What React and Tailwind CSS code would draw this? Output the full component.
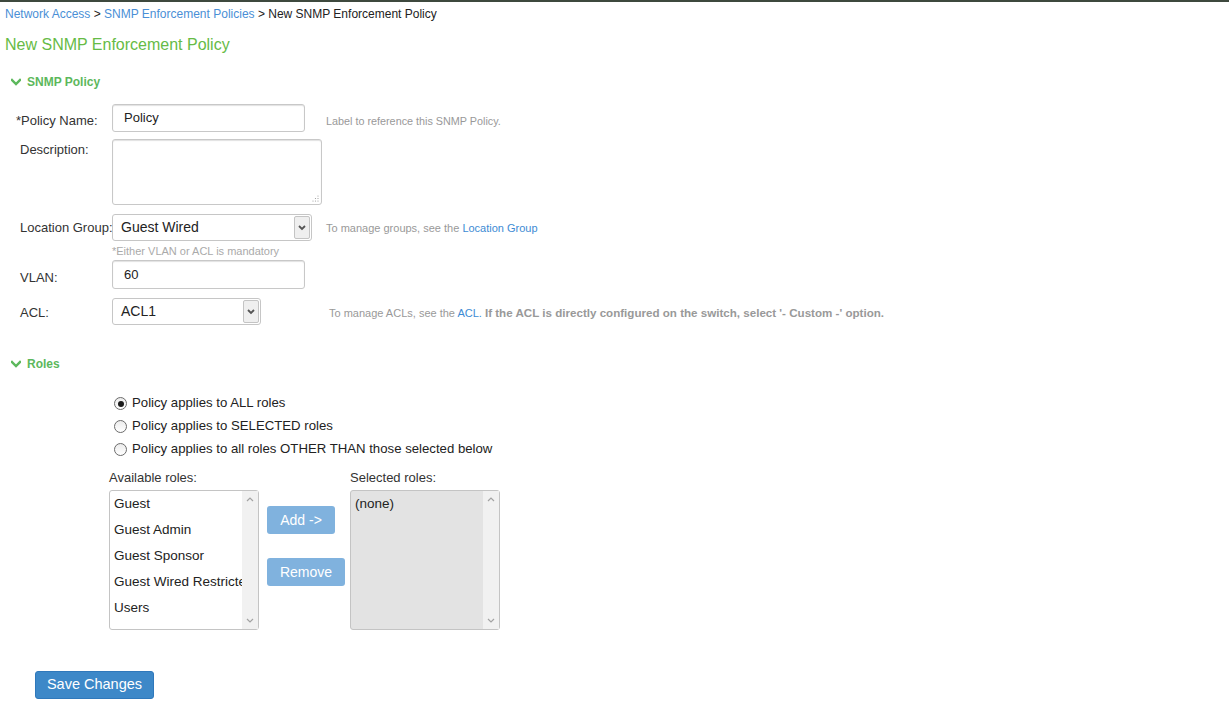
import React from "react";

function Chevron() {
  return (
    <svg width="10" height="8" viewBox="0 0 10 8" className="mr-[6px]">
      <path d="M1 2 L5 6 L9 2" fill="none" stroke="#5cb85c" strokeWidth="2.4" strokeLinecap="square" />
    </svg>
  );
}

function Caret({ up }) {
  return (
    <svg width="8" height="6" viewBox="0 0 8 6">
      <path d={up ? "M1 5 L4 2 L7 5" : "M1 1 L4 4 L7 1"} fill="none" stroke="#a3a3a3" strokeWidth="1.2" />
    </svg>
  );
}

function Select({ value, width }) {
  return (
    <div className={`flex h-[27px] shrink-0 ${width} items-stretch rounded-[3px] border border-[#c6c6c6] bg-white`}>
      <div className="flex flex-1 items-center pl-[8px] text-[14px] text-[#222]">{value}</div>
      <div className="m-[1px] flex w-[16px] items-center justify-center rounded-[2px] border border-[#c4c4c4] bg-[#efefef]">
        <svg width="8" height="6" viewBox="0 0 8 6">
          <path d="M1 1 L4 4 L7 1" fill="none" stroke="#555" strokeWidth="1.8" />
        </svg>
      </div>
    </div>
  );
}

function Radio({ checked, label }) {
  return (
    <div className="flex h-[23px] items-center">
      <span className="mt-[2px] mr-[5px] flex h-[13px] w-[13px] items-center justify-center rounded-full border border-[#6b6b6b] bg-gradient-to-b from-[#ececec] to-white">
        {checked && <span className="h-[6px] w-[6px] rounded-full bg-[#1a1a1a]" />}
      </span>
      <span className="text-[13.2px] text-[#222]">{label}</span>
    </div>
  );
}

function ListBox({ items, grey }) {
  return (
    <div className={`flex h-[140px] w-[150px] rounded-[3px] border border-[#c4c4c4] ${grey ? "bg-[#e3e3e3]" : "bg-white"}`}>
      <div className="flex-1 overflow-hidden pl-[4px]">
        {items.map((it) => (
          <div key={it} className="h-[26px] whitespace-nowrap text-[13.5px] leading-[26px] text-[#222]">{it}</div>
        ))}
      </div>
      <div className="flex w-[16px] flex-col items-center justify-between bg-[#f1f1f1] py-[5px]">
        <Caret up />
        <Caret />
      </div>
    </div>
  );
}

export default function App() {
  return (
    <div className="min-h-screen border-t-2 border-[#3e493e] bg-white font-['Liberation_Sans',Arial,sans-serif] text-[#333]">
      <div className="px-[5px] pt-[3px] text-[12px] leading-[18px]">
        <span className="text-[#4a8fd6]">Network Access</span>
        <span className="text-[#222]"> &gt; </span>
        <span className="text-[#4a8fd6]">SNMP Enforcement Policies</span>
        <span className="text-[#222]"> &gt; New SNMP Enforcement Policy</span>
      </div>
      <div className="mt-[12px] px-[5px] text-[16px] leading-[20px] text-[#66bb46]">New SNMP Enforcement Policy</div>

      <div className="mt-[19px] flex items-center pl-[11px] text-[12px] font-bold leading-[16px] text-[#5cb85c]">
        <Chevron />
        SNMP Policy
      </div>

      <div className="mt-[14px] flex items-center">
        <div className="w-[112px] shrink-0 whitespace-nowrap pl-[16px] pt-[6px] text-[13px]">*Policy Name:</div>
        <div className="flex h-[28px] w-[193px] items-center rounded-[3px] border border-[#c8c8c8] pl-[11px] text-[13px] text-[#222] shadow-[inset_0_1px_1px_rgba(0,0,0,0.12)]">Policy</div>
        <div className="ml-[21px] pt-[7px] text-[10.8px] text-[#999]">Label to reference this SNMP Policy.</div>
      </div>

      <div className="mt-[7px] flex items-start">
        <div className="w-[112px] shrink-0 whitespace-nowrap pl-[20px] pt-[1px] text-[13px]">Description:</div>
        <div className="relative h-[66px] w-[210px] rounded-[3px] border border-[#c8c8c8] shadow-[inset_0_1px_1px_rgba(0,0,0,0.12)]">
          <svg width="7" height="7" viewBox="0 0 7 7" className="absolute bottom-[2px] right-[2px]">
            <circle cx="6" cy="1" r="0.6" fill="#999" />
            <circle cx="6" cy="3.5" r="0.6" fill="#999" />
            <circle cx="3.5" cy="3.5" r="0.6" fill="#999" />
            <circle cx="6" cy="6" r="0.6" fill="#999" />
            <circle cx="3.5" cy="6" r="0.6" fill="#999" />
            <circle cx="1" cy="6" r="0.6" fill="#999" />
          </svg>
        </div>
      </div>

      <div className="mt-[9px] flex items-center">
        <div className="w-[112px] shrink-0 whitespace-nowrap pl-[20px] text-[13px]">Location Group:</div>
        <Select value="Guest Wired" width="w-[200px]" />
        <div className="ml-[14px] pt-[2px] text-[11px] text-[#999]">
          To manage groups, see the <span className="text-[#3d8bd4]">Location Group</span>
        </div>
      </div>
      <div className="mt-[4px] pl-[112px] text-[11px] leading-[13px] text-[#aaa]">*Either VLAN or ACL is mandatory</div>

      <div className="mt-[2px] flex items-center">
        <div className="w-[112px] shrink-0 pl-[20px] pt-[6px] text-[13px]">VLAN:</div>
        <div className="flex h-[29px] w-[193px] items-center rounded-[3px] border border-[#c8c8c8] pl-[11px] text-[13px] text-[#222] shadow-[inset_0_1px_1px_rgba(0,0,0,0.12)]">60</div>
      </div>

      <div className="mt-[9px] flex items-center">
        <div className="w-[112px] shrink-0 pl-[20px] pt-[2px] text-[13px]">ACL:</div>
        <Select value="ACL1" width="w-[149px]" />
        <div className="ml-[68px] whitespace-nowrap pt-[2px] text-[11px] text-[#999]">
          To manage ACLs, see the <span className="text-[#3d8bd4]">ACL.</span>{" "}
          <span className="text-[11.6px] font-bold">If the ACL is directly configured on the switch, select '- Custom -' option.</span>
        </div>
      </div>

      <div className="mt-[31px] flex items-center pl-[11px] text-[12px] font-bold leading-[16px] text-[#5cb85c]">
        <Chevron />
        Roles
      </div>

      <div className="mt-[19px] pl-[114px]">
        <Radio checked label="Policy applies to ALL roles" />
        <Radio label="Policy applies to SELECTED roles" />
        <Radio label="Policy applies to all roles OTHER THAN those selected below" />
      </div>

      <div className="mt-[10px] flex items-start pl-[109px]">
        <div>
          <div className="mb-[4px] text-[13px] leading-[16px] text-[#333]">Available roles:</div>
          <ListBox items={["Guest", "Guest Admin", "Guest Sponsor", "Guest Wired Restricted", "Users"]} />
        </div>
        <div className="ml-[8px] mt-[36px] flex flex-col items-start gap-[24px]">
          <div className="flex h-[28px] w-[68px] items-center justify-center rounded-[3px] bg-[#80b2de] text-[14px] text-white">Add -&gt;</div>
          <div className="flex h-[28px] w-[78px] items-center justify-center rounded-[3px] bg-[#80b2de] text-[14px] text-white">Remove</div>
        </div>
        <div className="ml-[5px]">
          <div className="mb-[4px] text-[13px] leading-[16px] text-[#333]">Selected roles:</div>
          <ListBox items={["(none)"]} grey />
        </div>
      </div>

      <div className="mt-[41px] pl-[35px]">
        <div className="flex h-[28px] w-[119px] items-center justify-center rounded-[3px] border border-[#2f78bb] bg-[#3d88c8] text-[14.5px] text-white">Save Changes</div>
      </div>
    </div>
  );
}
